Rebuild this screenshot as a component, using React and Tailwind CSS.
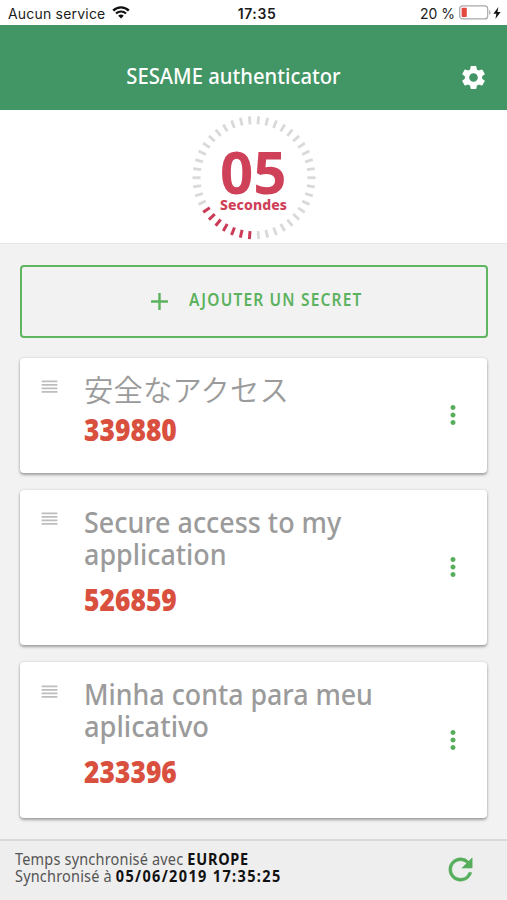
import React from 'react';
import { MdSettings, MdAdd, MdMoreVert, MdReorder } from 'react-icons/md';

const TICKS = 42;
const RED_FROM = 21;
const RED_TO = 27;

const secrets = [
  { id: 1, lines: [{ text: '安全なアクセス', cls: 'text-[29.3px] font-[350] tracking-[0.2px]' }], code: '339880',
    card: 'h-[115px]', title: 'mt-[16px]', codeCls: 'mt-[8px]', handle: 'mt-[18px]' },
  { id: 2, lines: [{ text: 'Secure access to my', cls: 'text-[29px] font-medium scale-x-[0.927]' }, { text: 'application', cls: 'text-[29px] font-medium scale-x-[0.927]' }], code: '526859',
    card: 'h-[155px] mt-[17px]', title: 'mt-[16px]', codeCls: 'mt-[14px]', handle: 'mt-[18px]' },
  { id: 3, lines: [{ text: 'Minha conta para meu', cls: 'text-[29px] font-medium scale-x-[0.923]' }, { text: 'aplicativo', cls: 'text-[29px] font-medium scale-x-[0.94]' }], code: '233396',
    card: 'h-[156px] mt-[17px]', title: 'mt-[16px]', codeCls: 'mt-[14px]', handle: 'mt-[19px]' },
];

function StatusBar() {
  return (
    <div className="h-[25px] bg-white grid grid-cols-3 items-center text-[14px] leading-none text-[#1c1c1c] font-['Inter',sans-serif] pt-[2px]">
      <div className="flex items-center pl-[8px]">
        <span className="whitespace-nowrap tracking-[0.2px]">Aucun service</span>
        <svg className="ml-[7px] -mt-[2px]" width="18" height="13" viewBox="0 0 18 13" fill="none" stroke="#111">
          <path d="M1.2 4.6a11 11 0 0 1 15.6 0" strokeWidth="2.4" />
          <path d="M4 7.6a7 7 0 0 1 10 0" strokeWidth="2.2" />
          <path d="M9 12.6L6.2 9.8a4 4 0 0 1 5.6 0z" fill="#111" stroke="none" />
        </svg>
      </div>
      <div className="text-center font-semibold pl-[7px] tracking-[0.6px]">17:35</div>
      <div className="flex items-center justify-end pr-[6px]">
        <span className="whitespace-nowrap">20 %</span>
        <svg className="ml-[4px] -mt-[2px]" width="33" height="15" viewBox="0 0 33 15">
          <rect x="0.7" y="0.9" width="28" height="13" rx="3" fill="#fff" stroke="#a9a9a9" strokeWidth="1.2" />
          <rect x="2.6" y="2.8" width="5.2" height="9.2" rx="1" fill="#e2493f" />
          <path d="M30.2 5.2c1.8.4 1.8 4 0 4.4z" fill="#a9a9a9" />
        </svg>
        <svg className="-mt-[2px] ml-[1px]" width="8" height="12" viewBox="0 0 8 12"><path d="M5.4 0L0.4 6.8h3L2.4 12l5.2-7H4.4z" fill="#111" /></svg>
      </div>
    </div>
  );
}

function Countdown() {
  const ticks = Array.from({ length: TICKS }, function(_, i) { return i; });
  return (
    <div className="h-[134px] bg-white border-b border-[#e6e6e6] flex justify-center">
      <div className="relative w-[126px] h-[126px] mt-[5px]">
        <svg width="126" height="126" viewBox="0 0 126 126">
          {ticks.map(function(i) {
            const red = i >= RED_FROM && i <= RED_TO;
            return (
              <line key={i} x1="63" y1="1.2" x2="63" y2="9.2" stroke={red ? '#cb3b57' : '#dbd8da'} strokeWidth={red ? 3 : 2.8}
                transform={'rotate(' + (i + 0.5) * 360 / TICKS + ' 63 62.7)'} />
            );
          })}
        </svg>
        <div className="absolute inset-0 flex flex-col items-center text-[#cf4059] font-bold">
          <span className="text-[60px] leading-[58px] mt-[27px] scale-x-[0.97]">05</span>
          <span className="text-[14px] leading-[14px] -mt-[2px] tracking-[0.1px] font-extrabold">Secondes</span>
        </div>
      </div>
    </div>
  );
}

function SecretCard({ item }) {
  return (
    <div className={'bg-white rounded-[4px] flex shadow-[0_2px_3px_rgba(0,0,0,0.32),0_0_3px_rgba(0,0,0,0.12)] ' + item.card}>
      <div className="w-[64px] pl-[19px] flex-shrink-0">
        <MdReorder size={21} color="#bdbdbd" className={item.handle} />
      </div>
      <div className="flex-1 min-w-0">
        <div className={item.title}>
          {item.lines.map(function(l) {
            return <div key={l.text} className={'w-max origin-left whitespace-nowrap leading-[32px] text-[#9b9b9b] ' + l.cls}>{l.text}</div>;
          })}
        </div>
        <div className={'w-max origin-left scale-x-[0.895] text-[29.5px] leading-[32px] font-black text-[#d9503f] ' + item.codeCls}>{item.code}</div>
      </div>
      <div className="w-[49px] flex items-center flex-shrink-0 pb-[1px]">
        <MdMoreVert size={30} color="#56ae5c" />
      </div>
    </div>
  );
}

export default function App() {
  return (
    <div className="w-[507px] h-[900px] overflow-hidden flex flex-col bg-[#f2f2f2] font-['Noto_Sans','Noto_Sans_CJK_JP',sans-serif]">
      <StatusBar />
      <header className="h-[85px] bg-[#429564] text-white flex items-center pl-[7px]">
        <h1 className="flex-1 flex justify-center text-[22px] font-medium pt-[16px]">
          <span className="scale-x-[0.92] whitespace-nowrap">SESAME authenticator</span>
        </h1>
        <div className="w-[48px] pt-[20px]"><MdSettings size={29} /></div>
      </header>
      <Countdown />
      <main className="flex-1 px-[20px] pt-[21px]">
        <button className="w-[468px] h-[73px] border-2 border-[#5fb560] rounded-[4px] flex items-center pl-[123px] text-[#5cb25e] mb-[20px]">
          <MdAdd size={29} />
          <span className="ml-[15px] origin-left scale-x-[0.91] whitespace-nowrap text-[17px] font-semibold tracking-[1.3px] -mt-[3px]">AJOUTER UN SECRET</span>
        </button>
        {secrets.map(function(s) { return <SecretCard key={s.id} item={s} />; })}
      </main>
      <footer className="h-[61px] bg-[#eeeeee] border-t-2 border-[#d9d9d9] flex items-center justify-between pl-[15px] pr-[29px]">
        <div className="text-[15.5px] leading-[17px] text-[#555] whitespace-nowrap -mt-[5px] tracking-[0.2px]">
          <div className="w-max origin-left scale-x-[0.935]">Temps synchronisé avec <b className="text-[#111] font-bold tracking-[0.8px]">EUROPE</b></div>
          <div className="w-max origin-left scale-x-[0.935]">Synchronisé à <b className="text-[#111] font-bold tracking-[1.45px]">05/06/2019 17:35:25</b></div>
        </div>
        <svg className="-mt-[2px]" width="35" height="35" viewBox="0 0 24 24" fill="#56ae5c" stroke="#56ae5c" strokeWidth="0.35">
          <path d="M17.65 6.35A7.958 7.958 0 0 0 12 4c-4.42 0-7.99 3.58-7.99 8s3.57 8 7.99 8c3.73 0 6.84-2.55 7.73-6h-2.08A5.99 5.99 0 0 1 12 18c-3.31 0-6-2.69-6-6s2.69-6 6-6c1.66 0 3.14.69 4.22 1.78L13 11h7V4l-2.35 2.35z" />
        </svg>
      </footer>
    </div>
  );
}
